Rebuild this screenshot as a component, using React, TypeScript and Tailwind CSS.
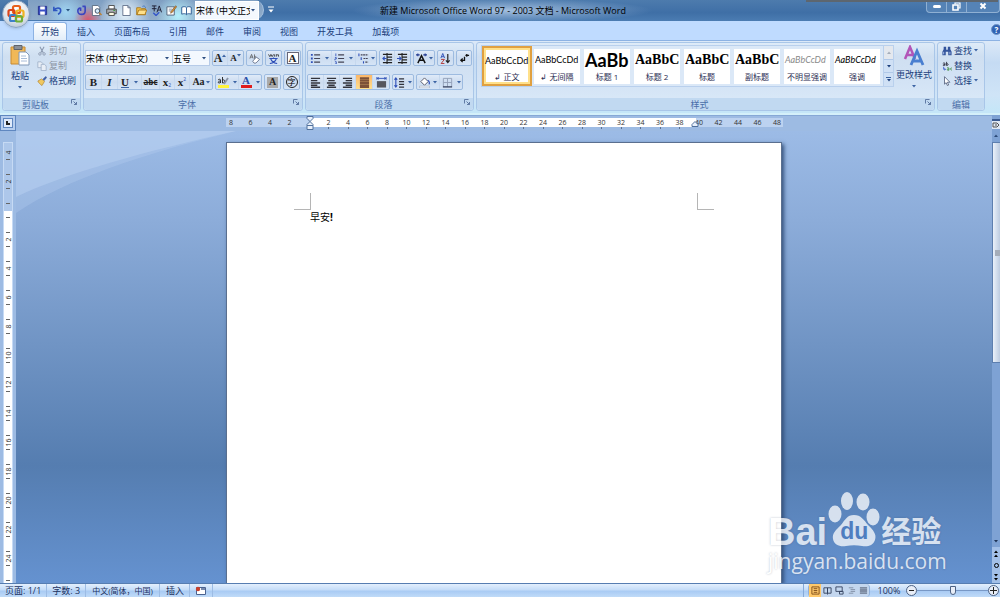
import React from 'react';

const tabs = ['开始', '插入', '页面布局', '引用', '邮件', '审阅', '视图', '开发工具', '加载项'];

const styleItems = [
  { sample: 'AaBbCcDd', name: '↲ 正文', look: 'text-[9px] font-[family-name:Lato]', active: true },
  { sample: 'AaBbCcDd', name: '↲ 无间隔', look: 'text-[9px] font-[family-name:Lato]' },
  { sample: 'AaBb', name: '标题 1', look: 'text-[18px] font-bold font-[family-name:Lato]' },
  { sample: 'AaBbC', name: '标题 2', look: 'text-[14px] font-bold font-[family-name:Liberation_Serif]' },
  { sample: 'AaBbC', name: '标题', look: 'text-[14px] font-bold font-[family-name:Liberation_Serif]' },
  { sample: 'AaBbC', name: '副标题', look: 'text-[14px] font-bold font-[family-name:Liberation_Serif]' },
  { sample: 'AaBbCcDd', name: '不明显强调', look: 'text-[9px] italic text-[#8a8a8a] font-[family-name:Lato]' },
  { sample: 'AaBbCcDd', name: '强调', look: 'text-[9px] italic font-[family-name:Lato]' },
];

// Horizontal ruler: 8 6 4 2 _ 2 4 ... 48
const rulerMarks = Array.from({ length: 29 }, (_, i) => i * 2 - 8);
// Vertical ruler: 4 2 _ 2 4 ... 24
const sideMarks = Array.from({ length: 15 }, (_, i) => i * 2 - 4);

export default function App() {
  return (
    <div className="relative flex h-screen flex-col overflow-hidden text-[9px] leading-none text-[#1c3f7c] font-[family-name:Open_Sans,Noto_Sans_CJK_SC,sans-serif]">
      <TitleBar />
      <TabRow />
      <Ribbon />
      <Workspace />
      <StatusBar />
      <Watermark />
    </div>
  );
}

function TitleBar() {
  return (
    <header className="flex h-[21px] shrink-0 items-start justify-between bg-[linear-gradient(180deg,#4d7bad,#3f6fa6_60%,#4b7cb2)] text-black">
      {/* Office button */}
      <button aria-label="Office 按钮" className="absolute left-[2px] top-0 z-10 flex size-7 items-center justify-center rounded-full border border-[#8aa3c0] bg-[radial-gradient(circle_at_50%_30%,#ffffff,#dfe5ec_55%,#a9b9cc)] shadow">
        <svg viewBox="0 0 20 20" className="size-5" fill="none" strokeWidth="2.2">
          <rect x="7" y="2" width="7" height="7" rx="1.5" stroke="#e8601c" />
          <rect x="2.5" y="6" width="6" height="6" rx="1.5" stroke="#d9441b" />
          <rect x="10.5" y="6.5" width="7" height="6.5" rx="1.5" stroke="#f0b323" />
          <rect x="4" y="11" width="6" height="6" rx="1.5" stroke="#3f80c8" />
          <rect x="10" y="12" width="6" height="5.5" rx="1.5" stroke="#6fae3a" />
        </svg>
      </button>

      {/* Quick access toolbar */}
      <div className="ml-7 flex h-5 items-center rounded-r-full border-r border-[#a9c4e2] bg-[radial-gradient(circle_at_60px_20px,#d8586e_0,transparent_14px),radial-gradient(circle_at_38px_12px,#9fd4f2_0,transparent_20px),radial-gradient(circle_at_97px_14px,#e4f1fa_0,transparent_26px),radial-gradient(circle_at_150px_16px,#b5f0fb_0,transparent_22px),linear-gradient(180deg,#7f9fc2,#93aecb)] pl-2">
        <Quick label="保存">
          <path d="M1.500 1.500h9v9h-9z" fill="#3b4fc4" stroke="#24308c" />
          <path d="M3.500 1.500h5v3.500h-5zM3.500 7h5v3.500h-5z" fill="#fff" />
        </Quick>
        <Quick label="撤消">
          <path d="M2 2v4h4M2.300 5.700C4 2.500 9.500 2.300 9.500 6c0 2-1.500 3.500-3 4" fill="none" stroke="#2e55c0" strokeWidth="1.700" />
        </Quick>
        <Caret className="mr-[5px] text-[#28527f]" />
        <Quick label="恢复">
          <path d="M7 1.500h3.500M10 1.500v5c0 5-8 5-8 0C2 4 3.500 3 5 3.500v3" fill="none" stroke="#3a46c0" strokeWidth="1.800" />
        </Quick>
        <Quick label="打印预览">
          <path d="M1.500.5h6l2 2v9h-8z" fill="#fff" stroke="#5a6b80" />
          <circle cx="7" cy="6.500" r="2.500" fill="#d5ecfa" stroke="#3a4a60" />
          <path d="M9 8.500l2.500 2.500" stroke="#c08030" strokeWidth="1.500" />
        </Quick>
        <Quick label="打印">
          <path d="M3 .5h6v4H3z" fill="#fff" stroke="#444" />
          <path d="M.8 4.500h10.400v5H.8z" fill="#a9adb3" stroke="#444" />
          <path d="M3 8h6v3.500H3z" fill="#fffbe0" stroke="#444" />
          <path d="M8 6h2" stroke="#3a9a3a" />
        </Quick>
        <Quick label="新建">
          <path d="M2 .5h5.500l2.500 2.500v8.500H2z" fill="#fff" stroke="#60708a" />
          <path d="M7.500.5v2.500H10" fill="none" stroke="#60708a" />
        </Quick>
        <Quick label="打开">
          <path d="M.8 3h4l1 1h4.500v6.500H.8z" fill="#f2c24b" stroke="#a87618" />
          <path d="M1 10.500l2-5h8.700l-2 5z" fill="#ffe08a" stroke="#a87618" />
          <path d="M7 1.500c2-1 3 0 3.500 1.500" fill="none" stroke="#3a70c0" />
        </Quick>
        <Quick label="简繁转换">
          <path d="M1 1h5M3.500 1v6M1 4h5M6.500 8L9 1l2.500 7M7.500 5.500h3" fill="none" stroke="#1a1a30" />
          <path d="M2.500 8.500l3 3L9 8" fill="none" stroke="#3556c8" strokeWidth="1.500" />
        </Quick>
        <Quick label="编辑">
          <path d="M1 2h8v9H1z" fill="#fff" stroke="#50607a" />
          <path d="M3 4.500h4M3 6.500h3" stroke="#7a8aa0" />
          <path d="M5 9l.5-2L10.500.8l1.200 1L7 8z" fill="#d8923a" stroke="#6a4a20" strokeWidth=".6" />
        </Quick>
        <Quick label="阅读版式">
          <path d="M.8 2.500C3 1.500 5 1.500 6 3c1-1.500 3-1.500 5.200-.5v7.500C9 9.200 7 9.200 6 10.500 5 9.200 3 9.200.8 10z" fill="#fff" stroke="#2a5a90" />
          <path d="M6 3v7.500" stroke="#2a5a90" />
        </Quick>
        <Combo label="样式字体" value="宋体 (中文正文)" className="h-[19px] w-[64px] border-white" />
        <span className="w-1" />
      </div>
      <button aria-label="自定义快速访问工具栏" className="ml-1 mt-[6px] text-white">
        <svg viewBox="0 0 6 7" className="h-[7px] w-[6px]">
          <path d="M0 1h6" stroke="currentColor" />
          <path d="M.5 3.500h5L3 6.500z" fill="currentColor" />
        </svg>
      </button>

      <h1 className="flex h-full flex-1 items-center justify-center bg-[radial-gradient(ellipse_150px_12px_at_35%_50%,#a4c0df,transparent)] pr-[194px] whitespace-nowrap">
        新建 Microsoft Office Word 97 - 2003 文档 - Microsoft Word
      </h1>

      {/* Window buttons */}
      <div className="flex h-[13px] rounded-b border border-t-0 border-[#8fb0d3] bg-[#5583b6]">
        <button aria-label="最小化" className="flex w-[20px] items-center justify-center border-r border-[#8fb0d3]">
          <span className="mt-px h-[3px] w-[8px] rounded-sm bg-white" />
        </button>
        <button aria-label="还原" className="flex w-[20px] items-center justify-center border-r border-[#8fb0d3]">
          <svg viewBox="0 0 9 9" className="size-[9px]" fill="none" stroke="#fff" strokeWidth="1.200">
            <path d="M3 2.500V1h5v5H6.500" />
            <path d="M1 3h5v5H1z" strokeWidth="1.600" />
          </svg>
        </button>
        <button aria-label="关闭" className="flex w-[32px] items-center justify-center">
          <svg viewBox="0 0 8 8" className="size-[8px]">
            <path d="M1.500 1.500l5 5M6.500 1.500l-5 5" stroke="#fff" strokeWidth="2" />
          </svg>
        </button>
      </div>
      <span className="absolute right-[2px] top-0 h-[2px] w-[192px] bg-[#5d666f]" />
    </header>
  );
}

function Quick({ label, children }: { label: string; children: React.ReactNode }) {
  return (
    <button aria-label={label} className="mr-[3px] flex size-[12px] items-center justify-center">
      <svg viewBox="0 0 12 12" className="size-[11px]">{children}</svg>
    </button>
  );
}

function Caret({ className = '' }: { className?: string }) {
  return (
    <svg viewBox="0 0 4 3" className={`h-[3px] w-[4px] shrink-0 ${className}`}>
      <path d="M0 0h4L2 2.500z" fill="currentColor" />
    </svg>
  );
}

function Combo({ label, value, className }: { label: string; value: string; className: string }) {
  return (
    <label className={`relative flex items-center border bg-[#f3f8fe] text-black ${className}`}>
      <select aria-label={label} className="h-full w-full appearance-none overflow-hidden bg-transparent pr-2 text-[9px] leading-none outline-none">
        <option>{value}</option>
      </select>
      <Caret className="pointer-events-none absolute right-[3px] text-[#2c4d80]" />
    </label>
  );
}

function TabRow() {
  return (
    <nav className="flex h-[19px] shrink-0 items-end gap-px bg-[#bfdbff] pl-[33px]">
      {tabs.map((tab, i) => (
        <button
          key={tab}
          className={
            i === 0
              ? 'h-[18px] rounded-t-[3px] border border-b-0 border-[#8db2e3] bg-[linear-gradient(180deg,#ffffff,#e2edf9)] px-[7px]'
              : 'h-[18px] px-[9px]'
          }
        >
          {tab}
        </button>
      ))}
      <button aria-label="帮助" className="-mr-[2px] ml-auto mb-[5px] size-[11px] rounded-full border border-[#6f93c4] bg-[#2f62b4] text-[8px] font-bold leading-none text-white">
        ?
      </button>
    </nav>
  );
}

function Ribbon() {
  return (
    <section className="flex h-[75px] shrink-0 gap-[2px] border-b-2 border-t border-b-[#d4f0fa] border-t-[#8db2e3] bg-[linear-gradient(180deg,#dce9f8,#c5dbf3_30%,#cfe4f7_75%,#c4e6f8)] px-[2px] pb-[2px] pt-px">
      {/* Clipboard */}
      <Group title="剪贴板" launcher className="w-[79px]">
        <div className="flex gap-[6px] pl-[6px]">
          <button className="flex w-[22px] flex-col items-center pt-px">
            <svg viewBox="0 0 20 22" className="h-[22px] w-[20px]">
              <path d="M1 3h14v17H1z" fill="#f0b858" stroke="#c88a30" />
              <path d="M4 1.500h8v4H4z" fill="#8a8f98" stroke="#5d626b" />
              <path d="M9 8h7l3 3v10H9z" fill="#fff" stroke="#8098b8" />
              <path d="M11 12h5M11 14.500h6M11 17h6" stroke="#a8bcd8" />
            </svg>
            <span className="mt-[5px] whitespace-nowrap">粘贴</span>
            <Caret className="mt-[6px] text-[#3c64a4]" />
          </button>
          <div className="flex flex-col">
            <Row label="剪切" className="text-[#8d96a5]">
              <path d="M3.500 1l4 7M8.500 1l-4 7" stroke="#8a98ae" strokeWidth="1.300" />
              <circle cx="3.500" cy="9.500" r="1.500" fill="none" stroke="#8a98ae" />
              <circle cx="8.500" cy="9.500" r="1.500" fill="none" stroke="#8a98ae" />
            </Row>
            <Row label="复制" className="text-[#8d96a5]">
              <path d="M1 1h4l2 2v5H1z" fill="#e8eef6" stroke="#9fb0c8" />
              <path d="M5 4h4l2 2v5.500H5z" fill="#e8eef6" stroke="#9fb0c8" />
            </Row>
            <Row label="格式刷">
              <path d="M7 4l3.500-3.500 1.200 1.200L8.500 5.500z" fill="#3a5fb0" stroke="#27407c" strokeWidth=".5" />
              <path d="M1 6l4.500-2.500 3.500 3L6 11.500C4 10 2 8.500 1 6z" fill="#f0c860" stroke="#a87820" strokeWidth=".7" />
            </Row>
          </div>
        </div>
      </Group>

      {/* Font */}
      <Group title="字体" launcher className="w-[220px]">
        <div className="flex flex-col gap-[8px] pl-px pt-[7px]">
          <div className="flex h-4 gap-[2px]">
            <div className="flex">
              <Combo label="字体" value="宋体 (中文正文)" className="h-4 w-[88px] border-[#b6cbe8]" />
              <Combo label="字号" value="五号" className="h-4 w-[37px] border-l-0 border-[#b6cbe8]" />
            </div>
            <Cluster>
              <Tool label="增大字体" className="w-[15px]"><Glyph size="text-[12px]">A</Glyph><Caret className="mb-[6px] rotate-180" /></Tool>
              <Tool label="缩小字体" className="w-[15px]"><Glyph size="text-[9px]">A</Glyph><Caret className="mb-[6px]" /></Tool>
            </Cluster>
            <Cluster>
              <Tool label="清除格式" className="w-[15px]">
                <Icon>
                  <path d="M1 6l1.800-4.500L4.500 6M1.700 4.500h2.300M6 1.500V6M6 4c2-1 2 2 0 2" fill="none" stroke="#555" strokeWidth=".8" />
                  <path d="M4 9l4-4.500 3.500 2.500-4 4H5.500z" fill="#fff" stroke="#6a7690" />
                </Icon>
              </Tool>
            </Cluster>
            <Cluster>
              <Tool label="拼音指南" className="w-[15px]">
                <Icon>
                  <path d="M.5 1.500L2 4l1.200-2.500L4.500 4 6 1.500M7 1.500v2.500M9 4V1.500M9 2h2.500v2" fill="none" stroke="#333" strokeWidth=".9" />
                  <path d="M1.500 6h9M6 5v1M3 6.500c1 2.500 4 4.500 7 5M9 6.500c-1 2.500-4 4.500-7 5" fill="none" stroke="#2f50b8" strokeWidth="1.200" />
                </Icon>
              </Tool>
            </Cluster>
            <Cluster>
              <Tool label="字符边框" className="w-[15px]">
                <span className="flex size-[12px] items-center justify-center border border-[#667] bg-white"><Glyph size="text-[11px]">A</Glyph></span>
              </Tool>
            </Cluster>
          </div>
          <div className="flex h-4 gap-[2px]">
            <Cluster>
              <Tool label="加粗" className="w-[16px]"><Glyph size="text-[11px]">B</Glyph></Tool>
              <Tool label="倾斜" className="w-[16px]"><span className="text-[11px] font-bold italic text-[#222] font-[family-name:Liberation_Serif]">I</span></Tool>
              <Tool label="下划线" className="w-[24px]"><span className="mr-[5px] underline"><Glyph size="text-[11px]">U</Glyph></span><Caret /></Tool>
              <Tool label="删除线" className="w-[18px]"><span className="text-[8px] font-bold text-[#222] line-through">abc</span></Tool>
              <Tool label="下标" className="w-[15px]"><Glyph size="text-[11px]">x</Glyph><span className="mt-[6px] text-[5px] text-[#2f50b8]">2</span></Tool>
              <Tool label="上标" className="w-[15px]"><Glyph size="text-[11px]">x</Glyph><span className="mb-[6px] text-[5px] text-[#2f50b8]">2</span></Tool>
              <Tool label="更改大小写" className="w-[22px]"><span className="mr-px"><Glyph size="text-[10px]">Aa</Glyph></span><Caret /></Tool>
            </Cluster>
            <Cluster>
              <Tool label="突出显示" className="w-[23px]">
                <span className="mr-[4px] flex flex-col items-center">
                  <svg viewBox="0 0 12 9" className="h-[9px] w-[12px]">
                    <path d="M1 4c1-1 2.500-1 2.500 0v3M3.500 5c-2-.3-3 2-1.500 2s1.500-1 1.500-1M5.500 1v6M5.500 4c3-1 3 3 0 3" fill="none" stroke="#222" strokeWidth=".9" />
                    <path d="M7 8l4-6" stroke="#8a93a5" strokeWidth="1.800" />
                  </svg>
                  <span className="h-[3px] w-[11px] bg-[#fff33b]" />
                </span>
                <Caret />
              </Tool>
              <Tool label="字体颜色" className="w-[22px]">
                <span className="mr-[4px] flex flex-col items-center">
                  <span className="h-[9px] text-[11px] font-bold leading-[9px] text-[#2a4fa8] font-[family-name:Liberation_Serif]">A</span>
                  <span className="h-[3px] w-[11px] bg-[#e01b1b]" />
                </span>
                <Caret />
              </Tool>
            </Cluster>
            <Cluster>
              <Tool label="字符底纹" className="w-[15px]">
                <span className="flex size-[11px] items-center justify-center bg-[#a9a9a9]"><Glyph size="text-[10px]">A</Glyph></span>
              </Tool>
            </Cluster>
            <Cluster>
              <Tool label="带圈字符" className="w-[15px]">
                <span className="flex size-[12px] items-center justify-center rounded-full border border-[#222] text-[8px] text-black">字</span>
              </Tool>
            </Cluster>
          </div>
        </div>
      </Group>

      {/* Paragraph */}
      <Group title="段落" launcher className="w-[169px]">
        <div className="flex flex-col gap-[8px] pl-px pt-[7px]">
          <div className="flex h-4 gap-[2px]">
            <Cluster>
              <Tool label="项目符号" className="w-[24px]">
                <Icon>
                  <path d="M1 2h2M1 6h2M1 10h2" stroke="#2f50b8" strokeWidth="2" />
                  <path d="M4.500 2H11M4.500 6H11M4.500 10H11" stroke="#445" strokeWidth="1.200" />
                </Icon>
                <Caret className="ml-[4px]" />
              </Tool>
              <Tool label="编号" className="w-[24px]">
                <Icon>
                  <path d="M2 .5v3M1 5h1.500v1.500H1V8M1 9.500h1.500V12H1" fill="none" stroke="#2f50b8" strokeWidth=".9" />
                  <path d="M4.500 2H11M4.500 6H11M4.500 10H11" stroke="#445" strokeWidth="1.200" />
                </Icon>
                <Caret className="ml-[4px]" />
              </Tool>
              <Tool label="多级列表" className="w-[20px]">
                <Icon>
                  <path d="M1 .5v3M3.500 4.500v3M6 9v2.500" stroke="#2f50b8" strokeWidth="1.200" />
                  <path d="M3 2h8M6 6h5M8 10h3" stroke="#445" strokeWidth="1.200" strokeDasharray="2 .6" />
                </Icon>
                <Caret className="ml-[2px]" />
              </Tool>
            </Cluster>
            <Cluster>
              <Tool label="减少缩进量" className="w-[15px]">
                <Icon>
                  <path d="M1 1.500h10M6 4.500h5M6 7.500h5M1 10.500h10M5.500 0v12" stroke="#222" strokeWidth="1.200" />
                  <path d="M5 6H1M3 4L1 6l2 2" fill="none" stroke="#2f50b8" strokeWidth="1.200" />
                </Icon>
              </Tool>
              <Tool label="增加缩进量" className="w-[15px]">
                <Icon>
                  <path d="M1 1.500h10M6 4.500h5M6 7.500h5M1 10.500h10M5.500 0v12" stroke="#222" strokeWidth="1.200" />
                  <path d="M0 6h4M2.500 4l2 2-2 2" fill="none" stroke="#2f50b8" strokeWidth="1.200" />
                </Icon>
              </Tool>
            </Cluster>
            <Cluster>
              <Tool label="中文版式" className="w-[20px]">
                <Icon>
                  <path d="M2 11l4-8 4 8M3.500 8h5" fill="none" stroke="#111" strokeWidth="1.600" />
                  <path d="M0 2h4M8 2h4M2 .5v3M10 .5v3" stroke="#223a90" strokeWidth="1.200" />
                </Icon>
                <Caret className="ml-[2px]" />
              </Tool>
            </Cluster>
            <Cluster>
              <Tool label="排序" className="w-[15px]">
                <Icon>
                  <path d="M1 5.500l2-5 2 5M1.800 4h2.500" fill="none" stroke="#2f50b8" />
                  <path d="M1.200 7h3.600l-3.600 4.500h3.600" fill="none" stroke="#b03030" />
                  <path d="M8.500 1v9.500M6.500 8l2 2.500 2-2.500" fill="none" stroke="#222" strokeWidth="1.300" />
                </Icon>
              </Tool>
            </Cluster>
            <Cluster>
              <Tool label="显示编辑标记" className="w-[14px]">
                <Icon>
                  <path d="M8.500 1v3M7 2.500h4M6 4v4H2M4 6L2 8l2 2" fill="none" stroke="#111" strokeWidth="1.400" />
                </Icon>
              </Tool>
            </Cluster>
          </div>
          <div className="flex h-4 gap-[2px]">
            <Cluster>
              <Tool label="左对齐" className="w-[16px]"><Icon><path d="M1 1.500h10M1 4h7M1 6.500h10M1 9h7M1 11.200h10" stroke="#33343c" strokeWidth="1.500" /></Icon></Tool>
              <Tool label="居中" className="w-[16px]"><Icon><path d="M1 1.500h10M2.500 4h7M1 6.500h10M2.500 9h7M1 11.200h10" stroke="#33343c" strokeWidth="1.500" /></Icon></Tool>
              <Tool label="右对齐" className="w-[16px]"><Icon><path d="M1 1.500h10M4 4h7M1 6.500h10M4 9h7M1 11.200h10" stroke="#33343c" strokeWidth="1.500" /></Icon></Tool>
              <Tool label="两端对齐" className="w-[17px] bg-[linear-gradient(180deg,#fbb76a,#ffdf8e)]"><Icon><path d="M1 1.500h10M1 4h10M1 6.500h10M1 9h10M1 11.200h10" stroke="#7d5138" strokeWidth="2.200" /></Icon></Tool>
              <Tool label="分散对齐" className="w-[16px]">
                <Icon>
                  <path d="M1 4.500h10v7H1z" fill="#55565e" />
                  <path d="M1 1.500h10M1 0v3M11 0v3M3 .5L1.500 1.500 3 2.500M9 .5l1.500 1L9 2.500" fill="none" stroke="#2f50b8" />
                </Icon>
              </Tool>
            </Cluster>
            <Cluster>
              <Tool label="行距" className="w-[20px]">
                <Icon>
                  <path d="M2 1v10M.5 3L2 1l1.500 2M.5 9L2 11l1.500-2" fill="none" stroke="#2f50b8" strokeWidth="1.200" />
                  <path d="M5.500 2H11M5.500 5H11M5.500 8H11M5.500 11H11" stroke="#33343c" strokeWidth="1.200" />
                </Icon>
                <Caret className="ml-[3px]" />
              </Tool>
            </Cluster>
            <Cluster>
              <Tool label="底纹" className="w-[23px]">
                <Icon>
                  <path d="M2 5l4-4 4 4-4 4z" fill="#fff" stroke="#556" />
                  <path d="M9.500 3.500c2 1 2 3 1.500 4.500" fill="none" stroke="#2f50b8" strokeWidth="1.300" />
                  <path d="M.5 10h11v1.800H.5z" fill="#fff" stroke="#8a96ac" strokeWidth=".5" />
                </Icon>
                <Caret className="ml-[3px]" />
              </Tool>
              <Tool label="边框" className="w-[22px]">
                <Icon>
                  <path d="M1.500 1.500h9v9M1.500 1.500v9M6 1.500v9M1.500 6h9" fill="none" stroke="#93a0b8" />
                  <path d="M1 10.800h10" stroke="#2a3350" strokeWidth="1.300" />
                </Icon>
                <Caret className="ml-[4px]" />
              </Tool>
            </Cluster>
          </div>
        </div>
      </Group>

      {/* Styles */}
      <Group title="样式" launcher className="w-[459px]">
        <div className="flex pl-[4px] pt-[2px]">
          <div className="flex h-[42px] items-center border border-[#b9d0ed] bg-[#dbe8f7]">
            {styleItems.map((item) => (
              <button
                key={item.name}
                className={
                  item.active
                    ? 'flex h-10 w-[50px] flex-col items-center justify-end overflow-hidden border-2 border-[#e0a040] bg-white pb-[2px] text-black ring-2 ring-inset ring-[#ffe08a]'
                    : 'mx-[2px] flex h-[35px] w-[46px] flex-col items-center justify-end overflow-hidden bg-white pb-[2px] text-black'
                }
              >
                <span className={`flex h-[20px] w-full items-center overflow-hidden pl-px whitespace-nowrap ${item.look}`}>{item.sample}</span>
                <span className="mt-[2px] whitespace-nowrap text-[8px] leading-[10px] text-[#1f2a50]">{item.name}</span>
              </button>
            ))}
            <div className="ml-px flex h-full w-[10px] flex-col border-l border-[#b9d0ed] bg-[#cfe0f5]">
              <button aria-label="上一行" className="flex flex-1 items-center justify-center border-b border-[#b0c8e8] bg-[#e4e8ee] text-[#a5adba]"><Caret className="rotate-180" /></button>
              <button aria-label="下一行" className="flex flex-1 items-center justify-center border-b border-[#b0c8e8]"><Caret /></button>
              <button aria-label="其他" className="flex flex-1 flex-col items-center justify-center gap-px"><span className="h-px w-[5px] bg-[#3a62a0]" /><Caret /></button>
            </div>
          </div>
          <button className="flex flex-1 flex-col items-center whitespace-nowrap">
            <svg viewBox="0 0 22 22" className="size-[22px]" fill="none">
              <path d="M2 14L7 2l5 12M4 10h6" stroke="#b255b8" strokeWidth="2.500" />
              <path d="M8 20l6-14 6 14M10 16h8" stroke="#4a7fd0" strokeWidth="2.800" />
            </svg>
            <span className="mt-[3px]">更改样式</span>
            <Caret className="mt-[6px] text-[#3c64a4]" />
          </button>
        </div>
      </Group>

      {/* Editing */}
      <Group title="编辑" className="w-[48px]">
        <div className="pl-[4px]">
          <Row label="查找" caret>
            <path d="M2 1h3v3l1 1 1-1V1h3v3l1.500 3v4H7.500V7h-3v4H.5V7L2 4z" fill="#33549c" />
            <path d="M2 7v3M9.500 7v3" stroke="#b9cdf0" />
          </Row>
          <Row label="替换">
            <path d="M1 3c1-1 2.500-1 2.500 0v2.500M3.500 4C1.500 3.700.8 5.500 2 5.500S3.500 4.500 3.500 4.500M5.500 1v4.500M5.500 3.500c2.500-1 2.500 2 0 2" fill="none" stroke="#223" />
            <path d="M2 7v3h2M3 9l1.200 1L3 11" fill="none" stroke="#3556c8" />
            <path d="M6 8.500c1-1 2.300-.5 2.300.5v2H7c-1.500 0-1-1.500 1.300-1.500M11.800 8.500c-2-.8-2 2.700 0 2.300" fill="none" stroke="#3a8a3a" />
          </Row>
          <Row label="选择" caret>
            <path d="M3 .8v9l2-1.800 1.500 3.500 1.500-.7L6.500 7.500h3z" fill="#fff" stroke="#445070" strokeWidth=".9" />
          </Row>
        </div>
      </Group>
    </section>
  );
}

function Group({ title, launcher, className, children }: { title: string; launcher?: boolean; className: string; children: React.ReactNode }) {
  return (
    <div className={`flex shrink-0 flex-col justify-between rounded-[3px] border border-[#a9c6e8] bg-[linear-gradient(180deg,#deebf8,#cfdff1_20%,#d3e3f5_60%,#dcebf9)] ${className}`}>
      {children}
      <div className={`relative flex h-[12px] items-center justify-center rounded-b-[3px] bg-[#c1d9f1] text-[#4a6ea8] ${launcher ? 'pr-3' : ''}`}>
        {title}
        {launcher && (
          <button aria-label={`${title}对话框`} className="absolute right-[3px] top-px">
            <svg viewBox="0 0 6 6" className="size-[6px]" fill="none" stroke="#56719c" strokeWidth=".9">
              <path d="M.5 4.500v-4h4M2.500 2.500l3 3M5.500 3v2.500H3" />
            </svg>
          </button>
        )}
      </div>
    </div>
  );
}

function Row({ label, caret, className = '', children }: { label: string; caret?: boolean; className?: string; children: React.ReactNode }) {
  return (
    <button className={`flex h-[15px] items-center gap-[2px] whitespace-nowrap ${className}`}>
      <svg viewBox="0 0 12 12" className="size-[10px]">{children}</svg>
      {label}
      {caret && <Caret className="text-[#3c64a4]" />}
    </button>
  );
}

function Cluster({ children }: { children: React.ReactNode }) {
  return (
    <div className="flex h-4 divide-x divide-[#c6d8ee] rounded-[2px] border border-[#9dbbe0] bg-[linear-gradient(180deg,#dfeaf8,#ccdcf0_50%,#d5e4f6)] text-[#3c64a4]">
      {children}
    </div>
  );
}

function Tool({ label, className, children }: { label: string; className: string; children: React.ReactNode }) {
  return (
    <button aria-label={label} className={`flex items-center justify-center ${className}`}>
      {children}
    </button>
  );
}

function Icon({ children }: { children: React.ReactNode }) {
  return <svg viewBox="0 0 12 12" className="size-[11px] shrink-0">{children}</svg>;
}

function Glyph({ size, children }: { size: string; children: React.ReactNode }) {
  return <span className={`font-bold leading-none text-[#222] font-[family-name:Liberation_Serif] ${size}`}>{children}</span>;
}

function Workspace() {
  return (
    <main className="flex min-h-0 flex-1">
      {/* Left edge: tab selector and vertical ruler */}
      <div className="flex w-4 shrink-0 flex-col bg-[#9dbbe3]">
        <button aria-label="制表符" className="flex h-4 shrink-0 items-center justify-center border border-[#5f87c0] bg-[#b5cdee]">
          <span className="flex size-[10px] items-center justify-center border border-[#5f87c0] bg-[#dfeafa]">
            <span className="size-[4px] border-b-2 border-l-2 border-[#222]" />
          </span>
        </button>
        <div className="ml-[3px] mt-[11px] flex min-h-0 w-[10px] flex-1 flex-col items-center overflow-hidden border-x border-t border-[#c6daf4] bg-[linear-gradient(180deg,#adc7ea_68px,#fff_68px)]">
          {sideMarks.map((n, i) => (
            <div key={n} className="flex h-[29px] shrink-0 flex-col items-center justify-end gap-[2px] pb-[7px] text-[7px] text-[#333] first:h-6">
              {i > 0 && <span className="h-px w-[4px] shrink-0 bg-[#666]" />}
              <span className="flex h-[9px] items-center -rotate-90">{n === 0 ? '' : Math.abs(n)}</span>
              <span className="h-px w-[4px] shrink-0 bg-[#666]" />
            </div>
          ))}
          <span className="mt-[7px] h-px w-[4px] shrink-0 bg-[#666]" />
        </div>
      </div>

      <div className="flex min-w-0 flex-1 flex-col">
        {/* Horizontal ruler */}
        <div className="flex h-4 shrink-0 justify-center border-t border-[#86a8d6] bg-[#9dbbe3] pt-[2px]">
          <div className="relative h-[9px] w-[557px] bg-[linear-gradient(90deg,#bcd2f0_84px,#fff_84px,#fff_470px,#bcd2f0_470px)]">
            <div className="flex justify-between">
              {rulerMarks.map((n) => (
                <div key={n} className="flex w-[11px] flex-col items-center text-[7px] leading-[9px] text-[#333]">
                  <span className="h-[9px]">{n === 0 ? '' : Math.abs(n)}</span>
                  {n > 0 && n < 40 && <span className="h-[2px] w-px bg-[#5c7090]" />}
                </div>
              ))}
            </div>
            <svg viewBox="0 0 8 14" className="absolute left-[80px] -top-[2px] h-[14px] w-[8px]" fill="#e8f0fb" stroke="#50709c">
              <path d="M1 .5h6v2L4 5.500 1 2.500zM4 5.500L7 8.500v1H1v-1zM1 9.500h6v4H1z" />
            </svg>
            <svg viewBox="0 0 8 6" className="absolute left-[465px] top-[3px] h-[6px] w-[8px]" fill="#e8f0fb" stroke="#50709c">
              <path d="M1 5.500v-2l3-3 3 3v2z" />
            </svg>
          </div>
        </div>

        {/* Desk and page */}
        <div className="relative flex min-h-0 flex-1 justify-center overflow-hidden bg-[linear-gradient(180deg,#9cbbe6,#8cacd9_20%,#557db0_74%,#6592d0)] pt-[11px]">
          <svg viewBox="0 0 220 84" className="absolute left-0 top-0 h-[84px] w-[220px]">
            <path d="M0 0H220C130 22 50 48 0 82z" fill="#b9d2f2" fillOpacity=".3" />
            <path d="M0 0H220C130 20 50 42 0 66z" fill="#b9d2f2" fillOpacity=".5" />
          </svg>
          <article className="relative w-[556px] border border-b-0 border-[#5a6f8f] bg-white px-[67px] pt-[50px] text-black shadow-[2px_2px_4px_#33507a]">
            <div className="flex justify-between">
              <span className="h-[17px] w-[17px] border-b border-r border-[#b5b5b5]" />
              <span className="h-[17px] w-[17px] border-b border-l border-[#b5b5b5]" />
            </div>
            <p className="px-4 pt-[2px] text-[10px]">早安<b>!</b></p>
          </article>
        </div>
      </div>

      {/* Scroll bar */}
      <div className="flex w-2 shrink-0 flex-col items-center bg-[#7ea2d4]">
        <button aria-label="标尺" className="mt-[4px] flex h-[10px] w-full items-center border-t-2 border-[#3a5a90] bg-[#dfe8f4]">
          <svg viewBox="0 0 8 8" className="size-2" fill="none" stroke="#555"><path d="M1 2h4l2 2-2 2H1zM3 4h2" /></svg>
        </button>
        <button aria-label="向上滚动" className="flex h-[13px] w-full items-center justify-center text-[#2b4a78]"><Caret className="rotate-180" /></button>
        <div className="flex h-[221px] w-full items-center justify-end border border-r-0 border-[#5d7faf] bg-[linear-gradient(90deg,#eaf1fa,#bccbe0)]">
          <span className="h-[6px] w-[5px] bg-[#a5adb9]" />
        </div>
        <div className="flex-1" />
        <button aria-label="向下滚动" className="flex h-[12px] w-full items-center justify-center text-[#1e3457]"><Caret /></button>
        <button aria-label="前一页" className="flex h-[12px] w-full flex-col items-center justify-center gap-px bg-[#a3c0e8] text-black"><Caret className="rotate-180" /><Caret className="rotate-180" /></button>
        <button aria-label="选择浏览对象" className="flex h-[12px] w-full items-center justify-center bg-[#a3c0e8]"><span className="size-[5px] rounded-full border border-black" /></button>
        <button aria-label="下一页" className="flex h-[12px] w-full flex-col items-center justify-center gap-px bg-[#a3c0e8] text-black"><Caret /><Caret /></button>
      </div>
    </main>
  );
}

function StatusBar() {
  return (
    <footer className="flex h-[14px] shrink-0 items-stretch justify-between border-t border-[#567db1] bg-[linear-gradient(180deg,#e3effd,#c4dcf8_45%,#a9cbf4_55%,#c0dbf8)] text-[#1c3160]">
      <div className="flex divide-x divide-[#9dbce4]">
        <span className="flex items-center pl-[5px] pr-[5px]">页面: 1/1</span>
        <span className="flex items-center px-[5px]">字数: 3</span>
        <span className="flex items-center px-[6px] text-[8px]">中文(简体，中国)</span>
        <span className="flex items-center pl-[6px] pr-[5px]">插入</span>
        <button aria-label="录制宏" className="flex items-center px-[5px]">
          <svg viewBox="0 0 12 10" className="h-[10px] w-[12px]">
            <path d="M1.500 1.500h9v7h-9z" fill="#fff" stroke="#4a6290" />
            <path d="M6 3h4" stroke="#4a6290" strokeWidth="1.500" />
            <circle cx="3" cy="3" r="2.200" fill="#c8402c" />
          </svg>
        </button>
        <span />
      </div>
      <div className="flex items-center border-l border-[#86a9d8] pl-[4px]">
        <div className="flex h-full rounded-sm border-x border-[#8fb0dc] bg-[#c3d6ee]">
          <ViewButton label="页面视图" active><path d="M1 1h8v8H1zM3 3h4M3 5h4M3 7h4" /></ViewButton>
          <ViewButton label="阅读版式视图"><path d="M1 2h4v6H1zM5 2h4v6H5zM5 8v1.500" /></ViewButton>
          <ViewButton label="Web 版式视图"><path d="M1 1h7v5H1zM5 6h4v3H5z" /></ViewButton>
          <ViewButton label="大纲视图" dim><path d="M2 2h5M4 4h5M4 6h5M2 8h5" /></ViewButton>
          <ViewButton label="普通视图" dim><path d="M1 2h8M1 4h8M1 6h8M1 8h8" strokeWidth="1.800" /></ViewButton>
        </div>
        <button className="w-[36px] pl-[2px]">100%</button>
        <button aria-label="缩小" className="flex size-[11px] shrink-0 items-center justify-center rounded-full border border-[#4d6284] bg-[#e8eef8]">
          <span className="h-px w-[5px] bg-[#222]" />
        </button>
        <input
          type="range"
          aria-label="显示比例"
          defaultValue={50}
          className="h-[10px] w-[71px] appearance-none bg-[linear-gradient(180deg,transparent_4px,#7898c6_4px,#7898c6_5px,transparent_5px)] [&::-webkit-slider-thumb]:h-[9px] [&::-webkit-slider-thumb]:w-[6px] [&::-webkit-slider-thumb]:appearance-none [&::-webkit-slider-thumb]:rounded-b-[3px] [&::-webkit-slider-thumb]:border [&::-webkit-slider-thumb]:border-[#4d6284] [&::-webkit-slider-thumb]:bg-[#e8eef8]"
        />
        <button aria-label="放大" className="relative flex size-[11px] shrink-0 items-center justify-center rounded-full border border-[#4d6284] bg-[#e8eef8]">
          <svg viewBox="0 0 7 7" className="size-[7px]" stroke="#222"><path d="M0 3.500h7M3.500 0v7" /></svg>
        </button>
        <span className="w-px" />
      </div>
    </footer>
  );
}

function ViewButton({ label, active, dim, children }: { label: string; active?: boolean; dim?: boolean; children: React.ReactNode }) {
  return (
    <button aria-label={label} className={`flex w-[12px] items-center justify-center ${active ? 'bg-[#ffc96b] text-[#7a4a18]' : dim ? 'text-[#7e8ca3]' : 'text-[#33425f]'}`}>
      <svg viewBox="0 0 10 10" className="size-[9px]" fill="none" stroke="currentColor">{children}</svg>
    </button>
  );
}

function Watermark() {
  return (
    <div className="pointer-events-none absolute bottom-[21px] right-[54px] flex w-[178px] flex-col text-white opacity-75 [text-shadow:0_0_2px_rgba(40,60,100,0.45)]">
      <div className="flex items-end">
        <span className="text-[38px] font-bold leading-[30px] font-[family-name:Liberation_Sans]">Bai</span>
        <div className="relative h-[56px] w-[53px] shrink-0">
          <svg viewBox="0 0 53 56" className="h-[56px] w-[53px]" fill="#fff">
            <ellipse cx="8" cy="23" rx="6.500" ry="8.500" />
            <ellipse cx="20" cy="10" rx="6" ry="9" />
            <ellipse cx="36" cy="11" rx="6.500" ry="8.500" />
            <ellipse cx="46" cy="26" rx="6.500" ry="8.500" />
            <path d="M27 24c7 0 10 5 14 10 5 5 9 9 7 15-2 6-8 7-13 6-5-1-11-1-16 0-6 1-12-1-13-7-1-6 3-9 8-14 4-5 6-10 13-10z" />
          </svg>
          <span className="absolute left-[13px] top-[29px] text-[23px] font-bold leading-none text-[#4b7abf] [text-shadow:none] font-[family-name:Liberation_Sans]">du</span>
        </div>
        <span className="ml-px whitespace-nowrap text-[30px] font-bold leading-[33px]">经验</span>
      </div>
      <span className="text-[21px] font-medium leading-[29px]">jingyan.baidu.com</span>
    </div>
  );
}
